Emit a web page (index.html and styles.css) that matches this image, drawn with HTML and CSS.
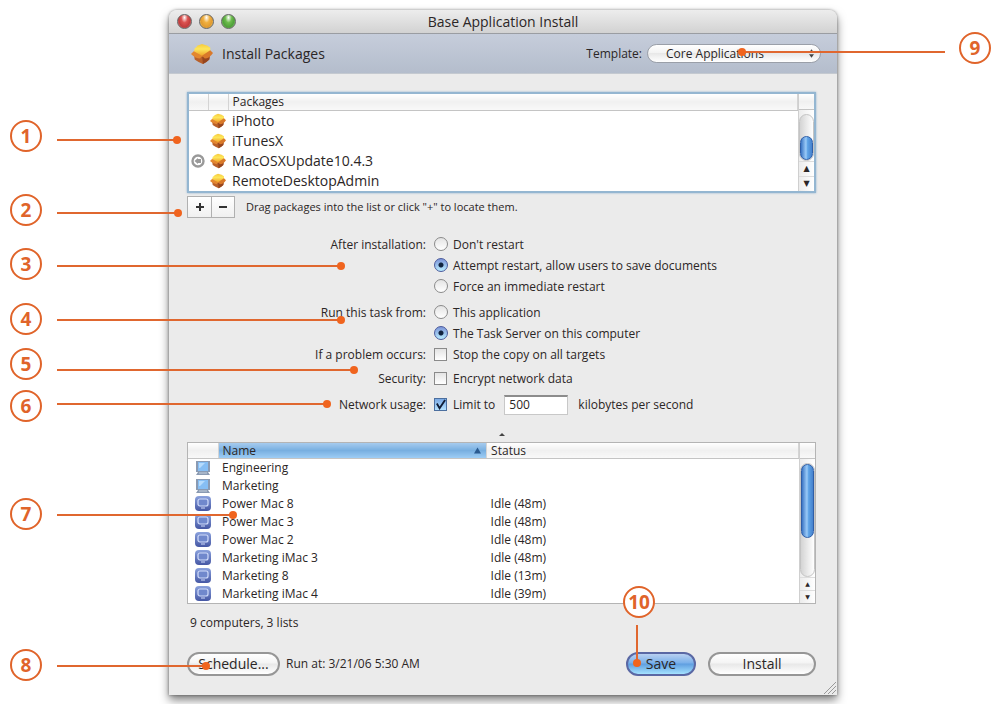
FILE: index.html
```html
<!DOCTYPE html>
<html lang="en">
<head>
    <meta charset="UTF-8">
    <meta name="viewport" content="width=device-width, initial-scale=1.0">
    <title>Base Application Install</title>
    <link rel="stylesheet" href="styles.css">
</head>
<body>
    <!-- Shared icons -->
    <svg class="defs" aria-hidden="true">
        <defs>
            <linearGradient id="boxTop" x1="0" y1="0" x2="0" y2="1">
                <stop offset="0" stop-color="#f6c93c"/>
                <stop offset="0.4" stop-color="#fde75c"/>
                <stop offset="1" stop-color="#ee9a22"/>
            </linearGradient>
            <linearGradient id="macBlue" x1="0" y1="0" x2="0" y2="1">
                <stop offset="0" stop-color="#8ba2dd"/>
                <stop offset="1" stop-color="#4557a4"/>
            </linearGradient>
            <symbol id="package" viewBox="0 0 24 24">
                <path d="M3 10 L12 13 L21 9 L20 18 Q17 21 13 23 Q8 21 4 18 Z" fill="#b8602a"/>
                <path d="M12 13 L21 9 L20 18 Q17 21 13 23 Z" fill="#96451e"/>
                <path d="M4 6 Q7 2 12 1 Q18 2 21 5 L21 10 L12 15 L3 10 Z" fill="url(#boxTop)"/>
                <path d="M3 9 L0 12 Q5 17 10 17 L12 14 Z" fill="#e3872f"/>
                <path d="M21 8 L24 11 Q20 17 15 17 L12 14 Z" fill="#d9792a"/>
            </symbol>
            <symbol id="group" viewBox="0 0 16 16">
                <path d="M1 1 H15 V12 H13 L15 15 H1 L3 12 H1 Z" fill="#8a9ab2"/>
                <rect x="3" y="2" width="10" height="9" fill="#86bef4"/>
                <path d="M4 3 H10 L5 8 H4 Z" fill="#b6dbfc"/>
                <path d="M4 13 H12" stroke="#c4d0de"/>
            </symbol>
            <symbol id="mac" viewBox="0 0 16 16">
                <rect x="0" y="0" width="16" height="15" rx="4" fill="url(#macBlue)"/>
                <rect x="3" y="3" width="10" height="7" rx="2" fill="#7088cc" stroke="#d0dbfa" stroke-width="1.2"/>
                <path d="M6 12 H10" stroke="#d0dbfa"/>
            </symbol>
        </defs>
    </svg>

    <div class="figure">
        <main class="window">
            <header class="titlebar">
                <div class="lights">
                    <button class="light red" aria-label="Close"></button>
                    <button class="light yellow" aria-label="Minimize"></button>
                    <button class="light green" aria-label="Zoom"></button>
                </div>
                <h1>Base Application Install</h1>
            </header>

            <div class="toolbar">
                <svg class="toolbar-icon"><use href="#package"/></svg>
                <h2>Install Packages</h2>
                <label for="template">Template:</label>
                <div class="popup">
                    <select id="template">
                        <option>Core Applications</option>
                    </select>
                    <svg class="popup-arrows" viewBox="0 0 6 10"><path d="M3 0 L6 4 H0 Z M0 6 H6 L3 10 Z" fill="#444"/></svg>
                </div>
            </div>

            <div class="content">
                <section class="list packages">
                    <table>
                        <thead>
                            <tr>
                                <th class="col-mark"></th>
                                <th class="col-icon"></th>
                                <th>Packages</th>
                            </tr>
                        </thead>
                        <tbody>
                            <tr><td></td><td><svg class="pkg"><use href="#package"/></svg></td><td>iPhoto</td></tr>
                            <tr><td></td><td><svg class="pkg"><use href="#package"/></svg></td><td>iTunesX</td></tr>
                            <tr>
                                <td><svg class="mark" viewBox="0 0 14 14"><circle cx="7" cy="7" r="5.500" fill="#fff" stroke="#999" stroke-width="2.400"/><path d="M3.500 7 L7 4 V5 H10 V9 H7 V10 Z" fill="#999"/></svg></td>
                                <td><svg class="pkg"><use href="#package"/></svg></td>
                                <td>MacOSXUpdate10.4.3</td>
                            </tr>
                            <tr><td></td><td><svg class="pkg"><use href="#package"/></svg></td><td>RemoteDesktopAdmin</td></tr>
                        </tbody>
                    </table>
                    <div class="scroll">
                        <div class="scroll-head"></div>
                        <div class="track"><div class="thumb thumb-low"></div></div>
                        <div class="arrow">&#9650;</div>
                        <div class="arrow">&#9660;</div>
                    </div>
                </section>

                <div class="edit-row">
                    <div class="segments">
                        <button aria-label="Add package"><svg viewBox="0 0 8 8"><path d="M0 4 H8 M4 0 V8"/></svg></button>
                        <button aria-label="Remove package"><svg viewBox="0 0 8 8"><path d="M0 4 H8"/></svg></button>
                    </div>
                    <p>Drag packages into the list or click "+" to locate them.</p>
                </div>

                <form class="options">
                    <div class="group" role="radiogroup" aria-labelledby="after">
                        <span class="caption" id="after">After installation:</span>
                        <div class="choices">
                            <label><input type="radio" name="after">Don't restart</label>
                            <label><input type="radio" name="after" checked>Attempt restart, allow users to save documents</label>
                            <label><input type="radio" name="after">Force an immediate restart</label>
                        </div>
                    </div>
                    <div class="group" role="radiogroup" aria-labelledby="from">
                        <span class="caption" id="from">Run this task from:</span>
                        <div class="choices">
                            <label><input type="radio" name="from">This application</label>
                            <label><input type="radio" name="from" checked>The Task Server on this computer</label>
                        </div>
                    </div>
                    <div class="group">
                        <span class="caption">If a problem occurs:</span>
                        <div class="choices"><label><input type="checkbox">Stop the copy on all targets</label></div>
                    </div>
                    <div class="group">
                        <span class="caption">Security:</span>
                        <div class="choices"><label><input type="checkbox">Encrypt network data</label></div>
                    </div>
                    <div class="group">
                        <span class="caption">Network usage:</span>
                        <div class="choices limit">
                            <label><input type="checkbox" checked>Limit to</label>
                            <input type="text" id="rate" value="500">
                            <label for="rate">kilobytes per second</label>
                        </div>
                    </div>
                </form>

                <button class="collapse" aria-label="Collapse"><svg viewBox="0 0 8 4"><path d="M4 0 L8 4 H0 Z" fill="#444"/></svg></button>

                <section class="list computers">
                    <table>
                        <thead>
                            <tr>
                                <th class="col-kind"></th>
                                <th class="col-name sorted"><div>Name <svg viewBox="0 0 8 7"><path d="M4 0 L8 7 H0 Z" fill="#2a5a90"/></svg></div></th>
                                <th>Status</th>
                            </tr>
                        </thead>
                        <tbody>
                            <tr><td><svg class="kind"><use href="#group"/></svg></td><td>Engineering</td><td></td></tr>
                            <tr><td><svg class="kind"><use href="#group"/></svg></td><td>Marketing</td><td></td></tr>
                            <tr><td><svg class="kind"><use href="#mac"/></svg></td><td>Power Mac 8</td><td>Idle (48m)</td></tr>
                            <tr><td><svg class="kind"><use href="#mac"/></svg></td><td>Power Mac 3</td><td>Idle (48m)</td></tr>
                            <tr><td><svg class="kind"><use href="#mac"/></svg></td><td>Power Mac 2</td><td>Idle (48m)</td></tr>
                            <tr><td><svg class="kind"><use href="#mac"/></svg></td><td>Marketing iMac 3</td><td>Idle (48m)</td></tr>
                            <tr><td><svg class="kind"><use href="#mac"/></svg></td><td>Marketing 8</td><td>Idle (13m)</td></tr>
                            <tr><td><svg class="kind"><use href="#mac"/></svg></td><td>Marketing iMac 4</td><td>Idle (39m)</td></tr>
                        </tbody>
                    </table>
                    <div class="scroll">
                        <div class="scroll-head"></div>
                        <div class="track"><div class="thumb thumb-high"></div></div>
                        <div class="arrow">&#9650;</div>
                        <div class="arrow">&#9660;</div>
                    </div>
                </section>

                <p class="count">9 computers, 3 lists</p>

                <footer class="actions">
                    <button class="pill schedule">Schedule...</button>
                    <p>Run at: 3/21/06 5:30 AM</p>
                    <button class="pill save">Save</button>
                    <button class="pill install">Install</button>
                </footer>
            </div>
            <svg class="grip" viewBox="0 0 12 12"><path d="M0 12 L12 0 M4 12 L12 4 M8 12 L12 8" stroke="#999"/></svg>
        </main>

        <!-- Numbered callouts over the window -->
        <svg class="callouts" width="995" height="704">
            <g class="lines">
                <path d="M57 140 H177 M57 213 H178 M57 266 H341 M57 320 H341 M57 370 H354 M57 404 H327 M57 515 H233 M57 666 H206 M945 52 H742 M637 625 V663"/>
            </g>
            <g class="dots">
                <circle cx="177" cy="140" r="4"/>
                <circle cx="178" cy="213" r="4"/>
                <circle cx="341" cy="266" r="4"/>
                <circle cx="341" cy="320" r="4"/>
                <circle cx="354" cy="370" r="4"/>
                <circle cx="327" cy="404" r="4"/>
                <circle cx="233" cy="515" r="4"/>
                <circle cx="206" cy="666" r="4"/>
                <circle cx="742" cy="52" r="4"/>
                <circle cx="637" cy="663" r="4"/>
            </g>
            <g class="rings">
                <circle cx="26" cy="136" r="15"/>
                <circle cx="26" cy="210" r="15"/>
                <circle cx="26" cy="264" r="15"/>
                <circle cx="26" cy="319" r="15"/>
                <circle cx="26" cy="364" r="15"/>
                <circle cx="26" cy="406" r="15"/>
                <circle cx="26" cy="514" r="15"/>
                <circle cx="26" cy="665" r="15"/>
                <circle cx="975" cy="48" r="15"/>
                <circle cx="639" cy="602" r="15"/>
            </g>
            <g class="numbers">
                <text x="26" y="143">1</text>
                <text x="26" y="217">2</text>
                <text x="26" y="271">3</text>
                <text x="26" y="326">4</text>
                <text x="26" y="371">5</text>
                <text x="26" y="413">6</text>
                <text x="26" y="521">7</text>
                <text x="26" y="672">8</text>
                <text x="975" y="55">9</text>
                <text x="639" y="609">10</text>
            </g>
        </svg>
    </div>
</body>
</html>
```

FILE: styles.css
```css
* {
    box-sizing: border-box;
}

body {
    margin: 0;
    background: #fff;
    color: #2b2626;
    font: 500 12px/18px "Open Sans", "Noto Sans", sans-serif;
}

h1, h2, p {
    margin: 0;
}

button, input, select {
    font: inherit;
    color: inherit;
    margin: 0;
    padding: 0;
}

svg {
    display: block;
}

.defs {
    position: absolute;
    width: 0;
    height: 0;
}

.figure {
    position: relative;
    padding: 10px 158px 9px 169px;
    overflow: hidden;
}

.window {
    position: relative;
    background: #ebebeb;
    border-radius: 8px 8px 0 0;
    box-shadow: 0 0 3px rgba(0, 0, 0, 0.4), 0 5px 10px rgba(0, 0, 0, 0.5);
}

/* Title bar */
.titlebar {
    display: grid;
    grid-template-columns: 80px 1fr 80px;
    align-items: center;
    height: 24px;
    padding: 0 8px;
    border-bottom: 1px solid #9a9da2;
    border-radius: 8px 8px 0 0;
    background: linear-gradient(#ededed, #d2d2d2);
}

.titlebar h1 {
    font-size: 14px;
    font-weight: 500;
    text-align: center;
}

.lights {
    display: flex;
    gap: 7px;
}

.light {
    width: 15px;
    height: 15px;
    border: 1px solid #666;
    border-radius: 50%;
}

.red {
    background: radial-gradient(ellipse at 50% 20%, #fff 0, #dc5250 35%, #c03c3c 65%, #f0a0a0);
}

.yellow {
    background: radial-gradient(ellipse at 50% 20%, #fff 0, #f0b040 35%, #e09a30 65%, #ffee90);
}

.green {
    background: radial-gradient(ellipse at 50% 20%, #fff 0, #6cbc4c 35%, #4fa03a 65%, #b4ee90);
}

/* Toolbar */
.toolbar {
    display: flex;
    align-items: center;
    height: 40px;
    padding: 0 16px 0 22px;
    background: linear-gradient(#c6cddb, #b4bdcc);
    border-bottom: 1px solid #c4c9d0;
}

.toolbar-icon {
    width: 22px;
    height: 22px;
}

.toolbar h2 {
    flex: 1;
    padding-left: 9px;
    font-size: 14px;
    font-weight: 500;
}

.popup {
    display: grid;
    align-items: center;
    width: 174px;
    margin-left: 5px;
}

.popup select {
    grid-area: 1 / 1;
    height: 19px;
    padding-left: 18px;
    appearance: none;
    border: 1px solid #9a9fa8;
    border-radius: 10px;
    background: linear-gradient(#fff, #f2f2f2 50%, #e8e8e8 50%, #fff);
    line-height: 16px;
}

.popup-arrows {
    grid-area: 1 / 1;
    justify-self: end;
    width: 5px;
    height: 9px;
    margin-right: 7px;
}

.content {
    padding: 18px 21px 19px 18px;
}

/* Lists */
.list {
    display: flex;
    border: 1px solid #b4b4b4;
    background: #fff;
}

.list table {
    flex: 1;
    border-collapse: collapse;
    table-layout: fixed;
}

.list th {
    height: 16px;
    padding: 0 0 0 4px;
    border-right: 1px solid #d4d4d4;
    border-bottom: 1px solid #c4c4c4;
    background: linear-gradient(#fff, #f0f0f0 50%, #f8f8f8);
    font-weight: 500;
    line-height: 15px;
    text-align: left;
}

.list td {
    padding: 0 0 0 4px;
}

.packages {
    border: 2px solid #94b6d1;
    box-shadow: 0 0 2px #8fb2cf;
}

.packages tbody {
    font-size: 14px;
}

.packages td {
    height: 20px;
    line-height: 20px;
}

.packages td:nth-child(-n+2) {
    padding: 0 0 0 2px;
}

.col-mark {
    width: 19px;
}

.col-icon {
    width: 20px;
}

.pkg {
    width: 16px;
    height: 16px;
}

.mark {
    width: 14px;
    height: 14px;
}

.computers td {
    height: 18px;
    line-height: 18px;
}

.computers td:first-child {
    padding-left: 7px;
}

.col-kind {
    width: 30px;
}

.col-name {
    width: 44%;
}

.kind {
    width: 16px;
    height: 16px;
}

.list .sorted {
    background: linear-gradient(#a6cbee, #78afe0 50%, #9dcdf5);
}

.sorted div {
    display: flex;
    align-items: center;
    justify-content: space-between;
    padding-right: 5px;
}

.sorted svg {
    width: 7px;
    height: 7px;
}

/* Scroll bars */
.scroll {
    display: flex;
    flex-direction: column;
    width: 16px;
    border-left: 1px solid #cfcfcf;
    background: linear-gradient(90deg, #ececec, #fff);
}

.scroll-head {
    height: 16px;
    border-bottom: 1px solid #c4c4c4;
    background: linear-gradient(#fff, #f0f0f0 50%, #f8f8f8);
}

.track {
    display: flex;
    flex: 1;
    flex-direction: column;
    margin-top: 4px;
    border: 1px solid #c4c4c4;
    border-radius: 8px;
    background: linear-gradient(90deg, #d4d4d4, #fff);
}

.thumb {
    border: 1px solid #2f5fa8;
    border-radius: 7px;
    background: linear-gradient(90deg, #3b75c4, #9bcbf8 45%, #5ea3e6 60%, #4581cd);
}

.thumb-low {
    flex: 0 0 24px;
    margin-top: auto;
}

.thumb-high {
    flex: 0 0 66%;
}

.arrow {
    height: 15px;
    border-top: 1px solid #ddd;
    font: 8px/14px "DejaVu Sans", sans-serif;
    text-align: center;
}

.computers .arrow {
    height: 13px;
    font-size: 6px;
    line-height: 12px;
}

/* Add and remove */
.edit-row {
    display: flex;
    align-items: center;
    gap: 11px;
    margin-top: 3px;
    font-size: 11px;
}

.segments {
    display: flex;
    border: 1px solid #b0b0b0;
}

.segments button {
    display: grid;
    place-items: center;
    width: 23px;
    height: 20px;
    border: 0;
    background: linear-gradient(#fff, #f0f0f0);
}

.segments button + button {
    border-left: 1px solid #b0b0b0;
}

.segments svg {
    width: 8px;
    height: 8px;
    stroke: #333;
    stroke-width: 2;
}

/* Options */
.options {
    display: flex;
    flex-direction: column;
    margin-top: 16px;
}

.group {
    display: grid;
    grid-template-columns: 38% 1fr;
    gap: 8px;
    line-height: 21px;
}

.group:nth-child(2) {
    margin-top: 5px;
}

.group:nth-child(n+4) {
    margin-top: 3px;
}

.caption {
    text-align: right;
}

.choices label {
    display: flex;
    align-items: center;
}

.options input[type="radio"],
.options input[type="checkbox"] {
    appearance: none;
    border: 1px solid #8a8a8a;
    background: linear-gradient(#e4e4e4, #fff);
}

.options input[type="radio"] {
    width: 14px;
    height: 14px;
    margin-right: 5px;
    border-radius: 50%;
}

.options input[type="radio"]:checked {
    border-color: #4a5a9c;
    background: radial-gradient(circle, #10233f 0, #10233f 2px, transparent 3px), linear-gradient(#7c95d8, #b8ecff);
}

.options input[type="checkbox"] {
    width: 13px;
    height: 13px;
    margin-right: 6px;
}

.options input[type="checkbox"]:checked {
    border-color: #4c6f9f;
    background: url("data:image/svg+xml,%3Csvg xmlns='http://www.w3.org/2000/svg' viewBox='0 0 12 12'%3E%3Cpath d='M2 5 L5 10 L11 1' fill='none' stroke='%23101c35' stroke-width='2'/%3E%3C/svg%3E"), linear-gradient(#7aa9e4, #b5e2ff);
}

.limit {
    display: flex;
    align-items: center;
}

.group:last-child {
    line-height: 26px;
}

.limit input[type="text"] {
    width: 64px;
    height: 20px;
    margin: 0 10px 0 9px;
    padding: 0 4px;
    border: 1px solid #c8c8c8;
    border-top: 2px solid #8c8c8c;
    background: #fff;
}

.collapse {
    display: block;
    width: 12px;
    height: 10px;
    margin: 12px auto 2px;
    padding: 3px;
    border: 0;
    background: none;
}

.collapse svg {
    width: 6px;
    height: 3px;
}

.count {
    margin-top: 10px;
    padding-left: 3px;
}

/* Bottom buttons */
.actions {
    display: flex;
    align-items: center;
    margin-top: 20px;
}

.actions p {
    flex: 1;
    padding-left: 6px;
}

.pill {
    height: 24px;
    border: 2px solid #969696;
    border-radius: 12px;
    background: linear-gradient(#fff, #f4f4f4 45%, #e8e8e8 50%, #fff);
    font-size: 14px;
    line-height: 18px;
}

.schedule {
    width: 93px;
}

.save {
    width: 70px;
    margin-right: 12px;
    border-color: #5a68a4;
    background: linear-gradient(#b9d0f1, #79b0ea 45%, #5f9ee0 50%, #a4e2ff);
}

.install {
    width: 108px;
}

.grip {
    position: absolute;
    right: 1px;
    bottom: 1px;
    width: 12px;
    height: 12px;
}

/* Callouts */
.callouts {
    position: absolute;
    top: 0;
    left: 0;
    pointer-events: none;
}

.lines {
    fill: none;
    stroke: #e0672f;
    stroke-width: 2;
}

.dots {
    fill: #f0641e;
}

.rings {
    fill: #fff;
    stroke: #e0642a;
    stroke-width: 2;
}

.numbers {
    fill: #e0642a;
    font-size: 19px;
    font-weight: 700;
    text-anchor: middle;
}
```
